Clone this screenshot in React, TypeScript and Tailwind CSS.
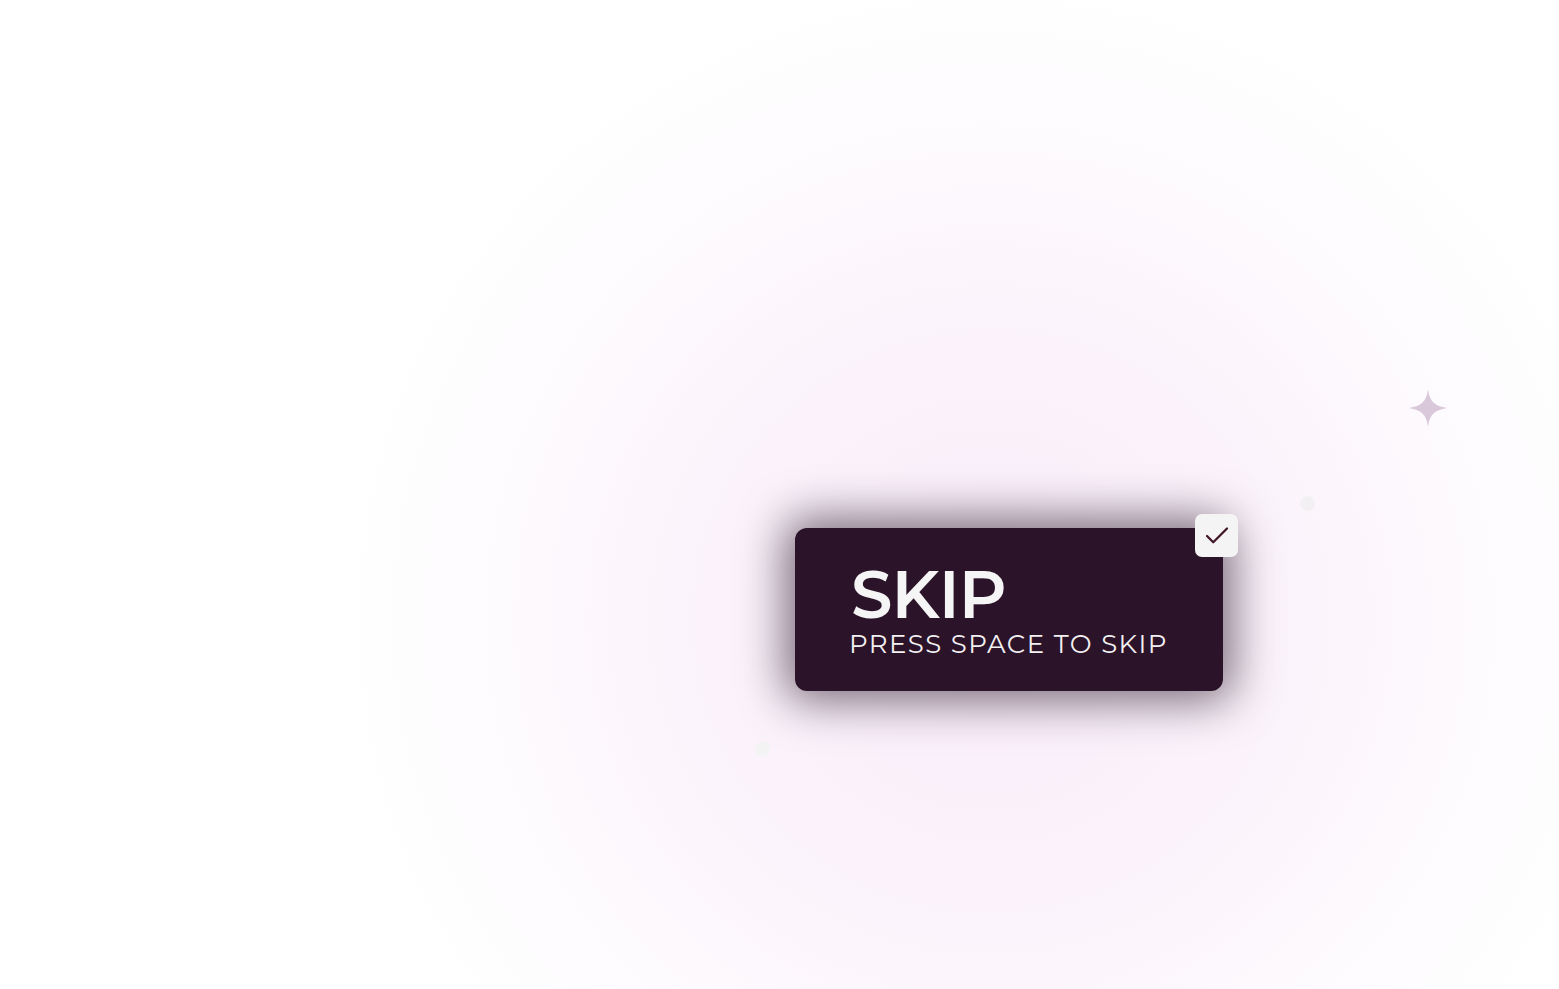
import { Check } from "lucide-react";

export default function App() {
  return (
    <div className="relative h-[989px] w-full overflow-hidden bg-white font-['Montserrat','Inter','Open_Sans',sans-serif]">
      {/* soft pink glow behind the card */}
      <div className="absolute inset-0 bg-[radial-gradient(ellipse_660px_650px_at_990px_620px,#f9ecf9_0%,#fbf3fb_45%,#fefcfe_80%,#ffffff_100%)]" />

      {/* sparkle */}
      <svg className="absolute left-[1409px] top-[389px]" width="38" height="38" viewBox="0 0 38 38">
        <path d="M19 0 C20.5 12 25 17 38 19 C25 21 20.5 26 19 38 C17.5 26 13 21 0 19 C13 17 17.5 12 19 0 Z" fill="#d9c7da" />
      </svg>
      <div className="absolute left-[1300px] top-[496px] h-[15px] w-[15px] rounded-full bg-[#f3f0f3]" />
      <div className="absolute left-[755px] top-[741px] h-[15px] w-[15px] rounded-full bg-[#f4f3f3]" />

      <div className="relative flex pl-[795px] pt-[528px]">
        <div className="relative flex h-[163px] w-[428px] flex-col rounded-[12px] bg-[#2b1329] pl-[56px] pt-[38px] shadow-[0_0_45px_10px_rgba(40,22,38,0.6)]">
          <div className="text-[66px] font-semibold leading-[58px] tracking-[-1px] text-[#f6f5f5]">SKIP</div>
          <div className="-ml-[2px] mt-[6px] text-[26px] font-normal leading-[28px] tracking-[1.4px] text-[#f2f0f1]">PRESS SPACE TO SKIP</div>

          <div className="absolute -right-[15px] -top-[14px] flex h-[43px] w-[43px] items-center justify-center rounded-[7px] bg-[#f5f4f4]">
            <Check className="h-[30px] w-[30px] text-[#3f1528]" strokeWidth={1.8} />
          </div>
        </div>
      </div>
    </div>
  );
}
